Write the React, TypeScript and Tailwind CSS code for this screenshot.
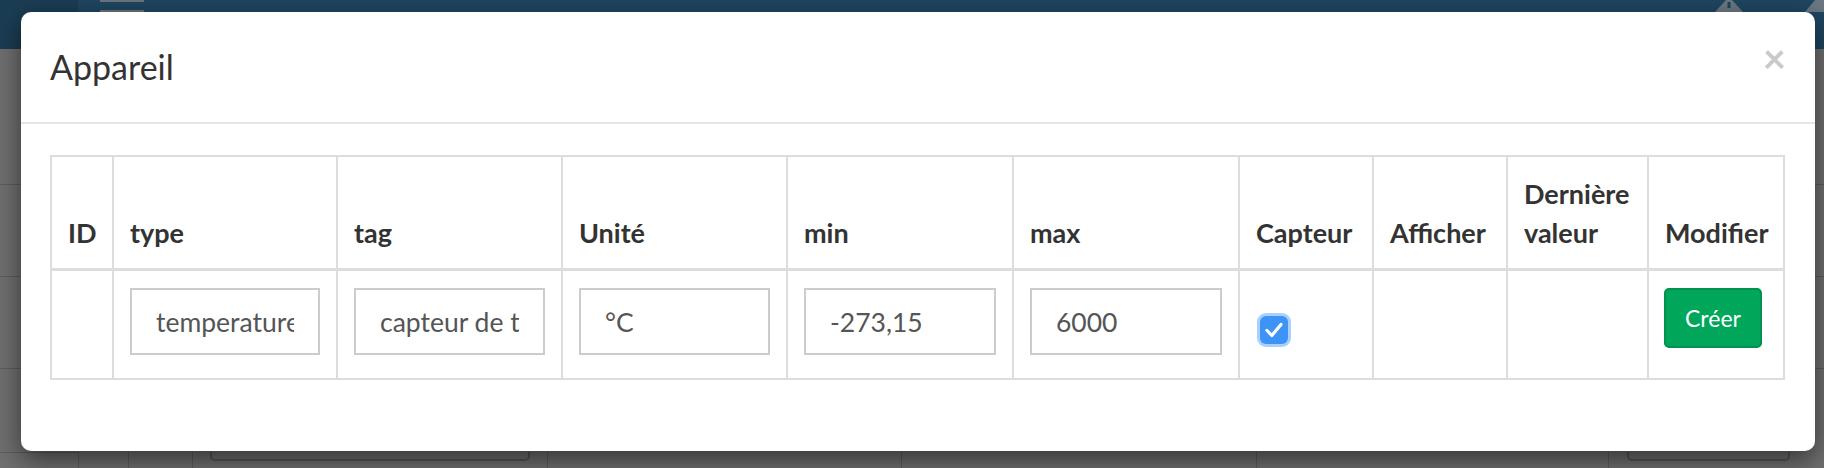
import React from "react";

const gridCols =
  "grid grid-cols-[60px_224px_225px_225px_226px_226px_134px_134px_141px_137px]";

const headers = ["ID", "type", "tag", "Unité", "min", "max", "Capteur", "Afficher", "Dernière valeur", "Modifier"];

const inputs = [
  { key: "type", value: "temperature" },
  { key: "tag", value: "capteur de temperature" },
  { key: "unit", value: "°C" },
  { key: "min", value: "-273,15" },
  { key: "max", value: "6000" },
];

function TextCell({ value }: { value: string }) {
  return (
    <div className="h-[107px] border-l-2 border-[#dddddd] px-[16px] pt-[17px]">
      <input
        readOnly
        defaultValue={value}
        className="h-[67px] w-full border-2 border-[#cccccc] bg-white px-[24px] text-[26.5px] text-[#555555] outline-none"
      />
    </div>
  );
}

function CheckedBox() {
  return (
    <div className="flex h-[28px] w-[28px] items-center justify-center rounded-[6px] bg-[#3d93f6] shadow-[0_0_0_3px_#a9d0fa]">
      <svg width="28" height="28" viewBox="0 0 28 28" fill="none">
        <path d="M7 14.5 L11.8 19.5 L21 8.5" stroke="white" strokeWidth="3.2" strokeLinecap="round" strokeLinejoin="round" />
      </svg>
    </div>
  );
}

function Backdrop() {
  // the page behind the modal, already darkened by the overlay
  return (
    <div className="flex h-full flex-col">
      <div className="flex h-[49px]">
        <div className="w-[78px] bg-[#1b3d54]" />
        <div className="flex flex-1 bg-[#1f4661]">
          <div className="ml-[22px] flex w-[44px] flex-col gap-[8px]">
            <div className="h-[2px] bg-[#6c757d]" />
            <div className="h-[3px] bg-[#6c757d]" />
          </div>
          <div className="flex-1" />
          <svg width="28" height="12" viewBox="0 0 28 12" className="mr-[60px]">
            <path d="M11 0 L17 0 L28 12 L0 12 Z" fill="#6b7782" />
            <rect x="12.5" y="2" width="3" height="6" fill="#1f4661" />
          </svg>
          <svg width="21" height="12" viewBox="0 0 21 12">
            <path d="M12 0 L21 0 L21 12 L2 12 Z" fill="#6b7782" />
          </svg>
        </div>
      </div>
      <div className="flex flex-1 flex-col bg-[#707070]">
        <div className="h-[136px] border-b border-[#5d5d5d]" />
        <div className="h-[92px] border-b border-[#5d5d5d]" />
        <div className="h-[92px] border-b border-[#5d5d5d]" />
        <div className="flex-1" />
        <div className="flex h-[16px]">
          <div className="w-[78px] border-t border-[#5d5d5d]" />
          <div className="w-[50px] border-l border-[#5d5d5d]" />
          <div className="w-[64px] border-l border-[#5d5d5d]" />
          <div className="w-[355px] border-l border-[#5d5d5d] px-[17px]">
            <div className="h-[9px] rounded-b-[5px] border-x-2 border-b-2 border-[#565656]" />
          </div>
          <div className="w-[354px] border-l border-[#5d5d5d]" />
          <div className="w-[355px] border-l border-[#5d5d5d]" />
          <div className="w-[352px] border-l border-[#5d5d5d]" />
          <div className="flex-1 border-l border-[#5d5d5d] pl-[18px]">
            <div className="h-[9px] w-[163px] rounded-b-[5px] border-x-2 border-b-2 border-[#565656]" />
          </div>
        </div>
      </div>
    </div>
  );
}

export default function App() {
  return (
    <div className="relative h-[468px] w-[1824px] overflow-hidden font-[Lato,sans-serif]">
      <Backdrop />

      {/* modal */}
      <div className="absolute left-[21px] top-[12px] h-[439px] w-[1794px] rounded-[10px] bg-white shadow-[0_9px_28px_rgba(0,0,0,0.55)]">
        <div className="flex h-[112px] items-start justify-between border-b-2 border-[#e5e5e5] px-[29px] pt-[31px]">
          <h4 className="text-[34px] leading-[48px] text-[#333333]">Appareil</h4>
          <button className="-mt-[5px] text-[40px] font-bold leading-none text-[#c9c9c9]">×</button>
        </div>

        <div className="px-[29px] pt-[31px]">
          <div className="w-[1735px] border-2 border-[#dddddd]">
            <div className={gridCols}>
              {headers.map((h, i) => (
                <div
                  key={h}
                  className={
                    "flex h-[114px] items-end border-b-[3px] border-[#dddddd] px-[16px] pb-[16px] text-[27px] font-bold leading-[39px] text-[#333333]" +
                    (i > 0 ? " border-l-2" : "")
                  }
                >
                  <span>{h}</span>
                </div>
              ))}
            </div>
            <div className={gridCols}>
              <div className="h-[107px]" />
              {inputs.map((f) => (
                <TextCell key={f.key} value={f.value} />
              ))}
              <div className="h-[107px] border-l-2 border-[#dddddd] pl-[20px] pt-[45px]">
                <CheckedBox />
              </div>
              <div className="h-[107px] border-l-2 border-[#dddddd]" />
              <div className="h-[107px] border-l-2 border-[#dddddd]" />
              <div className="h-[107px] border-l-2 border-[#dddddd] pl-[15px] pt-[17px]">
                <button className="h-[60px] w-[98px] rounded-[5px] border-2 border-[#019150] bg-[#00a65a] text-[23px] text-white">
                  Créer
                </button>
              </div>
            </div>
          </div>
        </div>
      </div>
    </div>
  );
}
